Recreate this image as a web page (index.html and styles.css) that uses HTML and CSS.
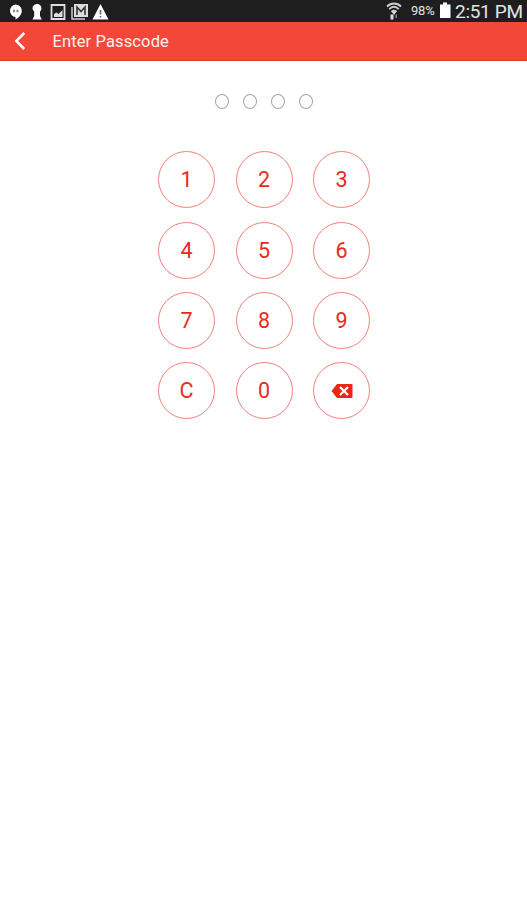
FILE: index.html
```html
<!DOCTYPE html>
<html lang="en">
<head>
    <meta charset="UTF-8">
    <title>Enter Passcode</title>
    <link rel="stylesheet" href="styles.css">
</head>
<body>
<div class="status">
    <svg class="notices" width="112" height="22" viewBox="0 0 112 22">
        <!-- chat -->
        <path fill="#fff" d="M15.500 4.500a6.300 6.300 0 0 1 6.300 6.300c0 4-3 7-6.300 8.700v-2.500a6.300 6.300 0 0 1 0-12.500z"/>
        <path fill="#888" d="M13 9.800h2v2.400h-2zM16.500 9.800h2v2.400h-2z"/>
        <!-- keyhole -->
        <path fill="#fff" d="M37.200 4a4.200 4.200 0 0 1 4.200 4.200c0 1.500-.6 2.600-1.400 3.300v4.500l1.800 3.500h-9.400l1.800-3.500v-4.500a4.200 4.200 0 0 1 3-7.500z"/>
        <!-- picture -->
        <path fill="none" stroke="#ddd" stroke-width="1.800" d="M51.500 5h13v14h-13z"/>
        <path fill="#ddd" d="M54 17v-3l2.500-1.500 2 1.500 4-4v7z"/>
        <!-- mail -->
        <path fill="none" stroke="#ccc" stroke-width="1.500" d="M72 7v12h13"/>
        <path fill="#ddd" d="M74 4h14v13h-14z"/>
        <path fill="none" stroke="#333" stroke-width="1.600" d="M77 15v-8l4 4.500 4-4.500v8"/>
        <!-- warning -->
        <path fill="#fff" d="M100.500 4l8 15.500h-16z"/>
        <path stroke="#666" stroke-width="1.600" d="M100.500 10v4.500M100.500 16v1.600"/>
    </svg>
    <svg class="wifi" width="18" height="22" viewBox="0 0 18 22">
        <g fill="none" stroke="#ccc" stroke-width="1.900">
            <path d="M2 6.500c4-4 10-4 14 0"/>
            <path d="M4.200 9.200c3-3 6.600-3 9.600 0"/>
            <path d="M6.500 11.800c1.500-1.500 3.500-1.500 5 0"/>
        </g>
        <path fill="#ddd" d="M6.500 11.500h5l-2.500 3.500zM5.500 14.500h3v5h-3z"/>
        <path fill="#888" d="M10.500 14.500h1.500v3.500h-1.500z"/>
    </svg>
    <span class="percent">98%</span>
    <svg class="battery" width="10" height="22" viewBox="0 0 10 22">
        <path fill="#fff" d="M3 2.500h4v2h3.500V18H0V4.500h3z"/>
    </svg>
    <span class="clock">2:51 PM</span>
</div>
<div class="header">
    <svg class="back" width="12" height="20" viewBox="0 0 12 20">
        <path d="M10.300 2L2.300 10l8 8" fill="none" stroke="#fff" stroke-width="2.500"/>
    </svg>
    <h1>Enter Passcode</h1>
</div>
<ul class="dots">
    <li></li>
    <li></li>
    <li></li>
    <li></li>
</ul>
<div class="keypad">
    <button>1</button>
    <button>2</button>
    <button>3</button>
    <button>4</button>
    <button>5</button>
    <button>6</button>
    <button>7</button>
    <button>8</button>
    <button>9</button>
    <button>C</button>
    <button>0</button>
    <button aria-label="Delete">
        <svg width="22" height="14" viewBox="0 0 22 14">
            <path fill="#ee2416" d="M6 0h14.500a1 1 0 0 1 1 1v12a1 1 0 0 1-1 1H6L.500 7z"/>
            <path stroke="#fff" stroke-width="2.200" d="M9 3l8 8M17 3l-8 8"/>
        </svg>
    </button>
</div>
</body>
</html>
```
FILE: styles.css
```css
*{margin:0;padding:0;box-sizing:border-box;font-family:Roboto,"Liberation Sans",sans-serif;}
body{
    background:#fff;
}
li{list-style:none;}
svg{display:block;}
.status{
    display:flex;
    align-items:center;
    height:22px;
    padding-right:4px;
    background:#1e1e1e;
    color:#e4e4e4;
    white-space:nowrap;
}
.wifi{
    margin-left:auto;
}
.percent{
    width:26px;
    margin-left:8px;
    font-size:13px;
    letter-spacing:-.2px;
    line-height:22px;
}
.battery{
    margin:0 5px 0 3px;
    overflow:visible;
}
.clock{
    width:68px;
    font-size:19px;
    letter-spacing:-.3px;
    line-height:23px;
}
.header{
    display:flex;
    align-items:center;
    height:39px;
    padding-left:14px;
    background:#f3473a;
    border-bottom:1px solid #e63a24;
}
.header h1{
    margin-left:26.500px;
    padding-top:1px;
    font-size:16.500px;
    font-weight:400;
    letter-spacing:.120px;
    color:#fff0ee;
}
.dots{
    display:flex;
    justify-content:center;
    gap:14.200px;
    margin-top:33px;
    padding-left:1px;
}
.dots li{
    width:14px;
    height:15px;
    border:1px solid #a5a5a5;
    border-radius:50%;
}
.keypad{
    display:grid;
    grid-template-columns:repeat(3,57px);
    justify-content:center;
    gap:13.300px 20.500px;
    margin-top:42.400px;
    padding-left:1px;
}
.keypad button{
    display:flex;
    align-items:center;
    justify-content:center;
    height:57px;
    border:1px solid #f0827a;
    border-radius:50%;
    background:none;
    font-size:21.500px;
    color:#ea2a20;
    cursor:pointer;
}
```
